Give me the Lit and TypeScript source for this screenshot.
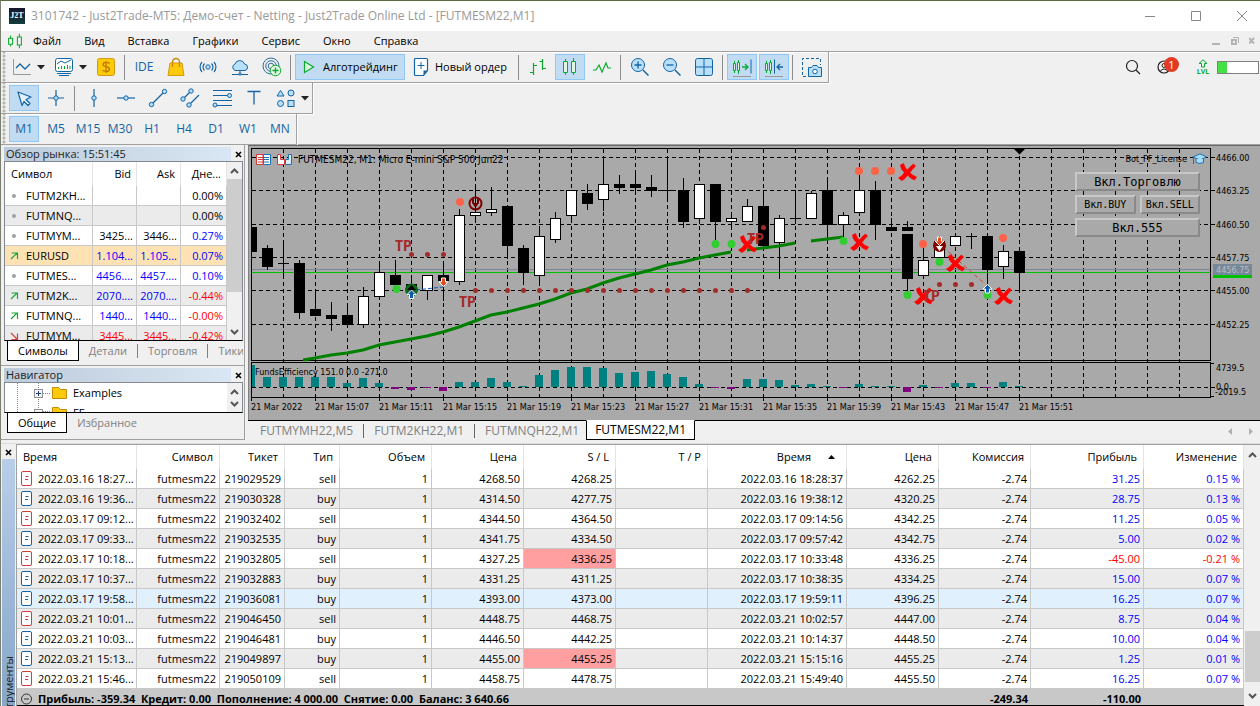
import { LitElement, html, svg, css } from "lit";
import { customElement } from "lit/decorators.js";
import { classMap } from "lit/directives/class-map.js";

const B = "#1464a5";
const L = "#b8e0fb";
const G = "#0aa82f";

const icons: Record<string, unknown> = {
  app: svg`<path d="M4.500 3v14M15.500 1v18" stroke="${G}" stroke-width="1.300"/><path d="M2 6.500h5v7.500H2zM13 5h5v10h-5z" fill="#f0f0f0" stroke="${G}" stroke-width="1.300"/>`,
  line: svg`<path d="M1.500 2v15.500H19" fill="none" stroke="#999"/><path d="M4 11l4-4 5 5 5-5" fill="none" stroke="${B}" stroke-width="1.300"/>`,
  monitor: svg`<rect x="1.500" y="1.500" width="17" height="13" rx="2" fill="#fff" stroke="${B}"/><path d="M3 7l4-3 4 2 6-3" fill="none" stroke="${B}"/><path d="M4.500 12v-2M7.500 12V9M10.500 12v-3M13.500 12V8M16 12V9" stroke="${G}"/><path d="M3 16.500h14M5 18.500h10" stroke="${B}"/>`,
  dollar: svg`<rect x="1.500" y="1.500" width="17" height="17" rx="2" fill="#fdca0a" stroke="#d39a10"/><path d="M13.500 6.500c-1-1.300-6.500-1.800-6.500 1 0 3 6.500 1.500 6.500 4.700 0 3-6 2.600-7 .8M10 4v12" fill="none" stroke="#c07c00" stroke-width="1.300"/>`,
  bag: svg`<path d="M4 6h12l2 12.500H2z" fill="#fdca0a" stroke="#d39a10"/><path d="M6.500 10V5a3.500 3.500 0 0 1 7 0v5" fill="none" stroke="#c58a08" stroke-width="1.300"/>`,
  signal: svg`<circle cx="10" cy="10" r="2.200" fill="${L}" stroke="${B}"/><path d="M6.500 6.500a5 5 0 0 0 0 7M13.500 6.500a5 5 0 0 1 0 7M4 5a7.500 7.500 0 0 0 0 10M16 5a7.500 7.500 0 0 1 0 10" fill="none" stroke="${B}" stroke-width="1.200"/>`,
  cloud: svg`<path d="M5 13.500a3.500 3.500 0 0 1 0-6.500 5 5 0 0 1 9.500 0 3.300 3.300 0 0 1 .5 6.500z" fill="${L}" stroke="${B}"/><path d="M10 14v3M2 17.500h16" stroke="${B}"/><circle cx="10" cy="17" r="1.200" fill="${L}" stroke="${B}"/>`,
  target: svg`<circle cx="9" cy="9" r="8" fill="none" stroke="#2f6f9f"/><circle cx="9" cy="9" r="5.300" fill="none" stroke="#2f6f9f"/><circle cx="9" cy="9" r="2.800" fill="none" stroke="#2f6f9f"/><circle cx="13.500" cy="13.500" r="5.300" fill="#e2f8e4" stroke="${G}"/><path d="M13.500 10.500v6M10.500 13.500h6" stroke="${G}" stroke-width="1.300"/>`,
  play: svg`<path d="M5.500 4.500v11l9-5.500z" fill="#dff5e0" stroke="${G}" stroke-width="1.200"/>`,
  order: svg`<path d="M4.500 1.500h11q1 0 1 1v11l-4 5h-8q-1 0-1-1v-15q0-1 1-1z" fill="#fff" stroke="${B}" stroke-width="1.200"/><path d="M16.500 13.500h-4v5z" fill="${B}"/><path d="M10 5v7M6.500 8.500h7" stroke="${B}"/>`,
  bars: svg`<path d="M5.500 6v12M2 15.500h3.500M5.500 8.500H9M14.500 2v11M11.500 4.500h3M14.500 11.500H18" fill="none" stroke="${G}" stroke-width="1.200"/>`,
  candles: svg`<path d="M5.500 2v16M13.500 1v17" stroke="${G}"/><path d="M3.500 4.500h4v11h-4zM11.500 4.500h4v11h-4z" fill="#dff5e0" stroke="${G}"/>`,
  zigzag: svg`<path d="M1 13h3l3-5 3 7 4-9 2 5h3" fill="none" stroke="${G}" stroke-width="1.200"/>`,
  zoomin: svg`<circle cx="8" cy="8" r="6.500" fill="${L}" stroke="${B}"/><path d="M13 13l5.500 5.500" stroke="${B}" stroke-width="1.500"/><path d="M8 4.500v7M4.500 8h7" stroke="${B}" stroke-width="1.300"/>`,
  zoomout: svg`<circle cx="8" cy="8" r="6.500" fill="${L}" stroke="${B}"/><path d="M13 13l5.500 5.500" stroke="${B}" stroke-width="1.500"/><path d="M4.500 8h7" stroke="${B}" stroke-width="1.300"/>`,
  grid: svg`<rect x="1.500" y="1.500" width="17" height="17" rx="2" fill="${L}" stroke="${B}"/><path d="M10 2v16M2 10h16" stroke="${B}"/>`,
  autoscroll: svg`<path d="M2.500 4v12M6.500 3v14" stroke="${G}"/><path d="M1.500 6.500h2v7h-2zM5.500 5.500h2v8h-2z" fill="#dff5e0" stroke="${G}"/><path d="M10 10h6M13 7l3 3-3 3" fill="none" stroke="${G}" stroke-width="1.300"/><path d="M19 2.500v14" stroke="${B}"/><path d="M1 19.500h18" stroke="#999"/>`,
  shift: svg`<path d="M2.500 4v12M6.500 3v14" stroke="${G}"/><path d="M1.500 6.500h2v7h-2zM5.500 5.500h2v8h-2z" fill="#dff5e0" stroke="${G}"/><path d="M10.500 2.500v14" stroke="${B}"/><path d="M19 10h-6M16 7l-3 3 3 3" fill="none" stroke="${B}" stroke-width="1.300"/><path d="M1 19.500h18" stroke="#999"/>`,
  camera: svg`<path d="M4 19.500H.5V1.500h18V8" fill="none" stroke="${B}" stroke-dasharray="3 2"/><path d="M6.500 10.500h3l1.500-2h4l1.500 2h3v9h-13z" fill="${L}" stroke="${B}"/><circle cx="13" cy="14.500" r="2.300" fill="#fff" stroke="${B}"/>`,
  cursor: svg`<path d="M4 4l13 5-5 2.500 4 4-2 2-4-4-2 4z" fill="#e4f3fd" stroke="${B}" stroke-width="1.200" stroke-linejoin="round"/>`,
  cross: svg`<path d="M10 2v16M2 10h16" stroke="${B}" stroke-width="1.200"/><circle cx="10" cy="10" r="2.200" fill="${L}" stroke="${B}"/>`,
  vline: svg`<path d="M10 1v18" stroke="${B}" stroke-width="1.200"/><circle cx="10" cy="10" r="2.200" fill="${L}" stroke="${B}"/>`,
  hline: svg`<path d="M1 10h18" stroke="${B}" stroke-width="1.200"/><circle cx="10" cy="10" r="2.200" fill="${L}" stroke="${B}"/>`,
  trend: svg`<path d="M3 17L17 3" stroke="${B}" stroke-width="1.200"/><circle cx="3.500" cy="16.500" r="2.200" fill="${L}" stroke="${B}"/><circle cx="16.500" cy="3.500" r="2.200" fill="${L}" stroke="${B}"/>`,
  channel: svg`<path d="M3 11L11 3M9 17L19 7" stroke="${B}" stroke-width="1.200"/><circle cx="3" cy="11" r="2.200" fill="${L}" stroke="${B}"/><circle cx="11" cy="3" r="2.200" fill="${L}" stroke="${B}"/><circle cx="9" cy="17" r="2.200" fill="${L}" stroke="${B}"/>`,
  fibo: svg`<path d="M1 2.500h19M1 7.500h15M1 12.500h19M4 17.500h16" stroke="${B}" stroke-width="1.200"/><circle cx="17.500" cy="7.500" r="2" fill="${L}" stroke="${B}"/><circle cx="3" cy="17" r="2" fill="${L}" stroke="${B}"/>`,
  text: svg`<path d="M3.500 3.500h13M10 3.500v13" stroke="${B}" stroke-width="1.300"/>`,
  shapes: svg`<path d="M4.500 2.500L8 8H1z" fill="${L}" stroke="${B}"/><circle cx="15" cy="5" r="3" fill="${L}" stroke="${B}"/><circle cx="4.500" cy="15.500" r="3" fill="${L}" stroke="${B}"/><rect x="12" y="12.500" width="6" height="6" fill="${L}" stroke="${B}"/>`,
  search: svg`<circle cx="9" cy="9" r="5.500" fill="none" stroke="#222" stroke-width="1.200"/><path d="M13 13l4 4" stroke="#222" stroke-width="1.300"/>`,
  user: svg`<circle cx="10" cy="10" r="6" fill="none" stroke="#222" stroke-width="1.200"/><circle cx="10" cy="8.500" r="2" fill="none" stroke="#222"/><path d="M6 14.500q4-5 8 0" fill="none" stroke="#222"/>`,
};

const icon = (name: string) => html`<svg class="ic" width="20" height="20" viewBox="0 0 20 20" aria-hidden="true">${icons[name]}</svg>`;
const caret = html`<svg class="caret" width="8" height="5" viewBox="0 0 8 5" aria-hidden="true"><path d="M0 0h8L4 4.500z" fill="#222"/></svg>`;
const chevron = (d: string) => html`<svg class="chev" width="9" height="6" viewBox="0 0 9 6" aria-hidden="true"><path d="${d}" fill="none" stroke="#555" stroke-width="2"/></svg>`;
const UP = "M1 5l3.500-3.500L8 5";
const DOWN = "M1 1l3.500 3.500L8 1";
const closeX = html`<svg width="7" height="7" viewBox="0 0 7 7" aria-hidden="true"><path d="M1 1l5 5M6 1L1 6" stroke="#000" stroke-width="1.600"/></svg>`;

// centre x, wick top, wick bottom, body top, body bottom, kind (b black, w white, d doji)
const candles: [number, number, number, number, number, string][] = [
  [251, 227, 252, 227, 252, "b"], [267, 245, 270, 248, 267, "b"], [283, 241, 278, 263, 263, "d"],
  [299, 260, 319, 263, 313, "b"], [315, 292, 316, 309, 316, "b"], [331, 302, 331, 315, 319, "b"],
  [347, 304, 328, 315, 325, "b"], [363, 287, 328, 296, 325, "w"], [379, 262, 297, 272, 297, "w"],
  [395, 260, 285, 275, 285, "b"], [411, 278, 295, 284, 293, "b"], [427, 275, 300, 275, 291, "w"],
  [443, 262, 301, 275, 281, "b"], [459, 209, 285, 215, 282, "w"], [475, 184, 222, 212, 216, "w"],
  [491, 187, 216, 209, 213, "w"], [507, 206, 259, 206, 246, "b"], [523, 245, 285, 248, 273, "b"],
  [539, 230, 285, 236, 276, "w"], [555, 212, 243, 218, 240, "w"], [571, 190, 222, 190, 216, "w"],
  [587, 184, 210, 193, 204, "b"], [603, 160, 211, 184, 200, "w"], [619, 175, 194, 184, 188, "b"],
  [635, 172, 193, 184, 188, "b"], [651, 175, 197, 187, 191, "b"], [667, 160, 200, 190, 190, "d"],
  [683, 178, 228, 190, 222, "b"], [699, 184, 224, 184, 219, "w"], [715, 184, 240, 184, 222, "b"],
  [731, 213, 228, 218, 222, "w"], [747, 199, 222, 206, 222, "w"], [763, 190, 248, 206, 246, "b"],
  [779, 215, 279, 218, 243, "w"], [795, 190, 224, 218, 218, "d"], [811, 191, 219, 193, 219, "w"],
  [827, 178, 240, 190, 225, "b"], [843, 212, 240, 215, 225, "w"], [859, 175, 213, 190, 213, "w"],
  [875, 181, 240, 190, 225, "b"], [891, 218, 231, 227, 231, "b"], [907, 221, 231, 227, 231, "b"],
  [907, 234, 295, 234, 279, "b"], [923, 250, 276, 260, 276, "w"], [939, 236, 258, 241, 258, "w"],
  [955, 234, 246, 236, 246, "w"], [971, 233, 249, 236, 236, "d"], [987, 234, 288, 236, 270, "b"],
  [1003, 245, 279, 251, 267, "w"], [1019, 251, 290, 251, 273, "b"],
];

// histogram heights from x = 267, step 16; negative values hang below zero
const histogram = [10, 10, 10, 10, 10, 4, 9, 4, -2, -3, -1, -4, 5, 5, 9, 5, 1, 12, 17, 20, 20, 19, 14, 15, 16, 13,
  10, 3, -1, -2, 8, 8, 7, 2, 3, 1, -1, 3, 1, 1, -5, 2, -1, 4, 4, -1, 5, 1];

const gridX = Array.from({ length: 29 }, (_, i) => 283 + i * 32);
const gridY: [number, string][] = [[157, "4466.00"], [190, "4463.25"], [224, "4460.50"], [257, "4457.75"], [290, "4455.00"], [324, "4452.25"]];
const times = ["21 Mar 2022", ...["07", "11", "15", "19", "23", "27", "31", "35", "39", "43", "47", "51"].map((m) => `21 Mar 15:${m}`)];
const profitDots: [number, number][] = [[411, 254], [427, 254], [443, 254], ...Array.from({ length: 18 }, (_, i): [number, number] => [475 + i * 16, 290]), [939, 284], [955, 284], [971, 284], [763, 227]];
const sellDots = [[460, 202], [859, 171], [875, 171], [891, 171], [923, 244], [1003, 238]];
const buyDots = [[396, 289], [715, 244], [731, 244], [843, 241], [939, 262], [907, 295], [987, 295]];
const crosses = [[907, 172], [747, 244], [859, 242], [955, 263], [923, 296], [1003, 296]];
const tps = [[395, 251], [459, 307], [747, 244], [923, 301]];

const watch = [
  ["dot", "FUTM2KH...", "", "", "0.00%", "k", "k"],
  ["dot", "FUTMNQ...", "", "", "0.00%", "k", "k"],
  ["dot", "FUTMYM...", "3425...", "3446...", "0.27%", "k", "b"],
  ["up", "EURUSD", "1.104...", "1.105...", "0.07%", "b", "b"],
  ["dot", "FUTMES...", "4456....", "4457....", "0.10%", "b", "b"],
  ["up", "FUTM2K...", "2070....", "2070....", "-0.44%", "b", "r"],
  ["up", "FUTMNQ...", "1440...", "1440...", "-0.00%", "b", "r"],
  ["down", "FUTMYM...", "3445...", "3445...", "-0.42%", "r", "r"],
];
const marks: Record<string, unknown> = {
  dot: svg`<circle cx="5" cy="5" r="2" fill="#a0a0a0"/>`,
  up: svg`<path d="M2 8l6-6M2.500 2h6v6" fill="none" stroke="#18a838" stroke-width="1.200"/>`,
  down: svg`<path d="M2 2l6 6M2.500 8.500h6v-6" fill="none" stroke="#d04040" stroke-width="1.200"/>`,
};

const deals = [
  ["2022.03.16 18:27...", "219029529", "sell", "4268.50", "4268.25", "2022.03.16 18:28:37", "4262.25", "31.25", "0.15 %"],
  ["2022.03.16 19:36...", "219030328", "buy", "4314.50", "4277.75", "2022.03.16 19:38:12", "4320.25", "28.75", "0.13 %"],
  ["2022.03.17 09:12...", "219032402", "sell", "4344.50", "4364.50", "2022.03.17 09:14:56", "4342.25", "11.25", "0.05 %"],
  ["2022.03.17 09:33...", "219032535", "buy", "4341.75", "4334.50", "2022.03.17 09:57:42", "4342.75", "5.00", "0.02 %"],
  ["2022.03.17 10:18...", "219032805", "sell", "4327.25", "4336.25", "2022.03.17 10:33:48", "4336.25", "-45.00", "-0.21 %"],
  ["2022.03.17 10:37...", "219032883", "buy", "4331.25", "4311.25", "2022.03.17 10:38:35", "4334.25", "15.00", "0.07 %"],
  ["2022.03.17 19:58...", "219036081", "buy", "4393.00", "4373.00", "2022.03.17 19:59:11", "4396.25", "16.25", "0.07 %"],
  ["2022.03.21 10:01...", "219046450", "sell", "4448.75", "4468.75", "2022.03.21 10:02:57", "4447.00", "8.75", "0.04 %"],
  ["2022.03.21 10:03...", "219046481", "buy", "4446.50", "4442.25", "2022.03.21 10:14:37", "4448.50", "10.00", "0.04 %"],
  ["2022.03.21 15:13...", "219049897", "buy", "4455.00", "4455.25", "2022.03.21 15:15:16", "4455.25", "1.25", "0.01 %"],
  ["2022.03.21 15:46...", "219050109", "sell", "4458.75", "4478.75", "2022.03.21 15:49:40", "4455.50", "16.25", "0.07 %"],
];
const dealCols = [120, 83, 65, 55, 92, 92, 92, 92, 139, 92, 92, 113, 100];
const dealHeads = ["Время", "Символ", "Тикет", "Тип", "Объем", "Цена", "S / L", "T / P", "Время", "Цена", "Комиссия", "Прибыль", "Изменение"];

@customElement("app-root")
export class AppRoot extends LitElement {
  static styles = css`
    :host { display: block; height: 100vh; overflow: hidden; background: #f0f0f0; color: #000; font: 11px/16px "Open Sans", "Noto Sans", sans-serif; }
    * { box-sizing: border-box; }
    button { font: inherit; color: inherit; background: none; border: 0; padding: 0; margin: 0; white-space: nowrap; }
    svg { display: block; flex: none; }
    .window { height: 100%; display: flex; flex-direction: column; border-top: 1px solid #5c6b3b; border-left: 1px solid #7c8070; }
    .title { flex: none; height: 30px; background: #fff; display: flex; align-items: center; padding-left: 8px; color: #999; font-size: 12px; white-space: nowrap; }
    .logo { flex: none; width: 16px; height: 16px; margin-right: 6px; background: linear-gradient(#15162c, #123c3c); color: #fff; font: bold 8px/16px "Liberation Serif", serif; text-align: center; }
    .grow { flex: 1; }
    .winbtns { display: flex; gap: 24px; padding-right: 7px; }
    .winbtns svg { margin: 2px; }
    .winbtns button { width: 22px; display: grid; place-items: center; }
    .menu { flex: none; height: 21px; display: flex; align-items: center; gap: 23px; padding: 0 5px 0 6px; border-bottom: 1px solid #a0a0a0; }
    .menu .ic { width: 16px; height: 16px; margin-right: -13px; }
    .mdi { display: flex; gap: 9px; align-items: center; }
    .bars { flex: none; display: flex; flex-direction: column; align-items: flex-start; box-shadow: inset 0 1px #fff, inset 0 -1px #a0a0a0; }
    .row { display: flex; width: 100%; }
    .bar { height: 31px; display: flex; align-items: center; gap: 2px; padding: 0 1px 0 8px; border-bottom: 1px solid #a0a0a0; border-right: 1px solid #a0a0a0; box-shadow: 1px 1px #fff; background: radial-gradient(circle at 2px 2px, #b4b4b4 1px, transparent 2px) 1px 2px / 4px 4px repeat-y; color: #1464a5; font-size: 12px; }
    .bar.first { padding-left: 6px; }
    .bar.last { box-shadow: 1px 0 #fff; }
    .tb { flex: none; width: 30px; height: 26px; display: grid; place-items: center; }
    .tb.on { background: #c1dcf2; box-shadow: inset 0 0 0 1px #90c8f6; }
    .wide { flex: none; width: 110px; height: 26px; display: flex; align-items: center; gap: 4px; padding-left: 4px; color: #000; font-size: 11px; }
    .wide.on { background: #c1dcf2; box-shadow: inset 0 0 0 1px #90c8f6; }
    .wide.order { width: 108px; }
    .sep { flex: none; width: 1px; height: 25px; margin: 0 2px 0 1px; background: #8c8c8c; }
    .caret { margin: 0 2px 0 -2px; }
    .status { display: flex; align-items: center; height: 30px; padding-right: 1px; }
    .status button { position: relative; width: 20px; height: 20px; }
    .search { margin-right: 11px; }
    .user { margin-right: 21px; }
    .badge { position: absolute; left: 10px; top: 0; width: 15px; height: 15px; border-radius: 50%; background: #e23b22; color: #fff; font: 11px/15px "Open Sans", sans-serif; text-align: center; }
    .lvl { display: flex; flex-direction: column; align-items: center; width: 16px; margin-right: 6px; color: #0aa82f; font: bold 7px/7px "Open Sans", sans-serif; }
    .meter { width: 42px; height: 13px; border: 1px solid #808080; background: linear-gradient(90deg, #45e045 9px, #fff 9px); }
    .main { flex: none; display: flex; }
    .left { flex: none; width: 244px; display: flex; flex-direction: column; border-right: 1px solid #a0a0a0; }
    .panel { padding: 2px 1px 0 3px; display: flex; flex-direction: column; border-bottom: 1px solid #a0a0a0; }
    .nav { flex: 1; }
    .cap { height: 14px; display: flex; align-items: center; justify-content: space-between; background: linear-gradient(90deg, #bccada, #d9e7f4) 0 0 / calc(100% - 12px) 100% no-repeat; padding: 0 1px 0 2px; color: #222; }
    .box { display: flex; border: 1px solid #828790; border-bottom: 1px solid #000; background: #fff; overflow: hidden; }
    .box.quotes { height: 180px; }
    .box.tree { height: 31px; }
    table { border-collapse: separate; border-spacing: 0; table-layout: fixed; }
    th { font-weight: normal; }
    th, td { white-space: nowrap; overflow: hidden; text-align: right; border-right: 1px solid #c8c8c8; }
    .q { flex: 1; min-width: 0; align-self: flex-start; }
    .q th { height: 24px; padding: 0 5px; border-color: #e4e4e4; }
    .q td { height: 20px; padding: 0 3px 0 0; border-bottom: 1px solid #c8c8c8; }
    .q th:first-child { text-align: left; padding-left: 6px; }
    .sym { display: flex; align-items: center; gap: 7px; padding-left: 4px; }
    .q tr:nth-child(even) td { background: #ebebeb; }
    .q tr.sel td { background: #ffe2b4; }
    .b { color: #00f; } .r { color: #f00; }
    .sb { flex: none; width: 15px; background: #f0f0f0; display: flex; flex-direction: column; justify-content: space-between; align-items: center; padding: 6px 0 5px; }
    .q-thumb { width: 15px; height: 113px; background: #cdcdcd; margin: 5px 0 auto; flex: none; }
    .tabs { height: 24px; display: flex; align-items: flex-start; overflow: hidden; color: #808080; padding-left: 3px; }
    .tabs button { flex: none; height: 14px; margin-top: 3px; padding: 0 10px; border-right: 1px solid #808080; display: flex; align-items: center; }
    .tabs button.on { color: #000; background: #fff; height: 21px; margin: -1px 0 0; border: 1px solid #000; border-top-color: #fff; }
    .tabs button:last-child { border-right: 0; }
    .treebody { flex: 1; min-width: 0; width: 0; }
    .chart { flex: 1; min-width: 0; margin-left: 3px; display: flex; flex-direction: column; }
    .canvas { position: relative; display: flex; height: 275px; background: #a9a9a9; border-top: 1px solid #696969; border-left: 1px solid #808080; font: 9px "DejaVu Sans Condensed", "DejaVu Sans", sans-serif; }
    .plot { flex: 1; min-width: 0; height: 274px; overflow: hidden; }
    .name { font-size: 10px; }
    .tp { font: bold 15px "Roboto Condensed", Roboto, sans-serif; }
    .ea { position: absolute; right: 60px; top: 26px; width: 125px; display: grid; grid-template-columns: 1fr 1fr; gap: 4px 4px; font: 10px/16px "DejaVu Sans Mono", monospace; }
    .ea button { height: 19px; background: #a9a9a9; border: 2px solid; border-color: #c8c8c8 #898989 #898989 #c8c8c8; display: flex; align-items: center; justify-content: center; }
    .ea .full { grid-column: 1 / 3; font-size: 12px; }
    .lic { position: absolute; right: 53px; top: 7px; display: flex; gap: 5px; align-items: center; }
    .ctabs { height: 20px; display: flex; align-items: flex-start; border-top: 1px solid #000; color: #808080; font-size: 12px; padding-left: 2px; }
    .ctabs button { flex: none; height: 14px; margin-top: 3px; padding: 0 10px; border-right: 1px solid #666; display: flex; align-items: center; }
    .ctabs button.before { border: 0; padding-right: 7px; }
    .ctabs button.on { height: 20px; margin-top: -1px; padding: 0 8px; background: #fff; color: #000; border: 1px solid #000; border-top-color: #fff; }
    .arrows { display: flex; gap: 17px; padding: 7px 7px 0 0; }
    .toolbox { flex: 1; min-height: 0; margin-top: 3px; border-top: 1px solid #dcdcdc; display: flex; overflow: hidden; }
    .side { flex: none; width: 15px; display: flex; flex-direction: column; padding: 2px 1px 0; }
    .x { height: 13px; display: grid; place-items: center; }
    .vert { flex: 1; overflow: hidden; background: linear-gradient(#b9cee8, #86a6c8); padding-top: 197px; line-height: 13px; color: #222; }
    .vert span { display: block; writing-mode: vertical-rl; transform: rotate(180deg); white-space: nowrap; width: 13px; }
    .list { flex: 1; min-width: 0; border-left: 1px solid #a0a0a0; border-top: 1px solid #a0a0a0; background: #f0f0f0; }
    .d { width: 100%; background: #fff; }
    .d th { height: 24px; padding: 0 6px 0 0; border-color: #e4e4e4; }
    .d th:first-child { text-align: left; padding-left: 6px; }
    .d td { height: 20px; padding: 0 3px 0 0; border-bottom: 1px solid #c8c8c8; }
    .d tr:nth-child(even) td { background: #ebebeb; }
    .d tr.hot td { background: #e1f0fd; }
    .d tr td.stop { background: #ff9f9f; }
    .when { display: flex; gap: 5px; align-items: center; padding-left: 4px; }
    .sort { display: inline-block; vertical-align: middle; margin: 0 5px 2px 17px; }
    .d tfoot td { height: 17px; line-height: 13px; padding-top: 3px; background: #c8c8c8; border: 0; border-bottom: 1px solid #000; font-weight: bold; }
    .sum { display: flex; gap: 5px; align-items: center; padding-left: 4px; white-space: pre; }
    .vs { flex: none; width: 16px; background: #f0f0f0; border-top: 1px solid #a0a0a0; display: flex; flex-direction: column; align-items: center; padding: 7px 0 7px; }
    .vs .thumb { width: 15px; height: 51px; background: #cdcdcd; margin: auto 0 11px 1px; }
  `;

  private tool(name: string, label: string, on = false) {
    return html`<button class=${classMap({ tb: true, on })} aria-label=${label}>${icon(name)}</button>`;
  }

  private arrow(x: number, y: number, up: boolean, fill: string) {
    const s = up ? 1 : -1;
    return svg`<path transform="translate(${x} ${y}) scale(1 ${s})" d="M0-4.500L4.500 0H2V4H-2V0H-4.500z" fill="${fill}" stroke="#fff"/>`;
  }

  private renderPlot() {
    return html`<svg class="plot" role="img" aria-label="FUTMESM22 M1">
      <g transform="translate(-249 -146)">
        <g stroke="#000" stroke-dasharray="4 3" shape-rendering="crispEdges">
          ${gridX.map((x) => svg`<line x1="${x + 0.5}" x2="${x + 0.5}" y1="149" y2="397"/>`)}
          ${gridY.map(([y]) => svg`<line x1="252" x2="3000" y1="${y + 0.5}" y2="${y + 0.5}"/>`)}
          <line x1="252" x2="3000" y1="387.500" y2="387.500"/>
        </g>
        <g shape-rendering="crispEdges">
          <rect x="252" y="269" width="3000" height="1" fill="#778899"/>
          <rect x="252" y="272" width="3000" height="1" fill="#00c000"/>
          <path d="M3000 148.500H251.500V360.500H3000M3000 362.500H251.500V397.500H3000" fill="none" stroke="#000"/>
          ${times.map((_, i) => svg`<rect x="${251 + i * 64}" y="397" width="1" height="4"/>`)}
          ${candles.map(([x, t, b, o, c, k]) => svg`<rect x="${x}" y="${t}" width="1" height="${b - t}"/>
            ${k === "d" ? svg`<rect x="${x - 5}" y="${o}" width="11" height="1"/>`
              : k === "b" ? svg`<rect x="${x - 5}" y="${o}" width="11" height="${c - o}"/>`
              : svg`<rect x="${x - 4.5}" y="${o + 0.5}" width="10" height="${c - o - 1}" fill="#fff" stroke="#000"/>`}`)}
          <rect x="252" y="365" width="3" height="22" fill="#008080"/>
          ${histogram.map((h, i) => svg`<rect x="${263 + i * 16}" y="${h > 0 ? 387 - h : 387}" width="8" height="${Math.abs(h)}" fill="${h > 0 ? "#008080" : "#800080"}"/>`)}
          <rect x="240" y="146" width="11" height="220" fill="#a9a9a9"/>
          <rect x="251" y="148" width="1" height="213"/>
        </g>
        <path d="M1014 149h11l-5.500 5.500z"/>
        <g fill="none" stroke="#008000" stroke-width="3">
          <path d="M303 360L315 358 331 355 347 353 363 350 379 345 395 342 411 339 427 336 443 332 459 327 475 321 491 315 507 312 523 308 539 304 555 299 571 293 587 289 603 283 619 278 635 274 651 270 667 265 683 262 699 258 715 255 731 252"/>
          <path d="M747 250L763 248 779 246 795 243M811 241L827 239 843 237"/>
        </g>
        <path d="M416 290L443 287" stroke="#0a5cb0" stroke-dasharray="4 2"/>
        <path d="M943 247L985 284" stroke="#d04a20" stroke-dasharray="4 3"/>
        ${profitDots.map(([x, y]) => svg`<circle cx="${x + 0.5}" cy="${y + 0.5}" r="2.500" fill="#a52a2a"/>`)}
        <circle cx="475.500" cy="203.500" r="6" fill="#a9a9a9" stroke="#800000" stroke-width="2"/>
        <path d="M472 199h2v4h3v-4h2v4l-3.500 5-3.500-5z" fill="#700000"/><rect x="475" y="196" width="1" height="14"/>
        <circle cx="411.500" cy="290" r="6.500" fill="#0a6a1a"/><path d="M411.500 285l4.500 5h-3v3h-3v-3h-3z"/>
        <circle cx="939.500" cy="245.500" r="6.500" fill="#800000"/><path d="M936 246h7l-3.500 5z" fill="#fff"/>
        ${sellDots.map(([x, y]) => svg`<circle cx="${x}" cy="${y}" r="4" fill="#ff6347"/>`)}
        ${buyDots.map(([x, y]) => svg`<circle cx="${x + 0.5}" cy="${y}" r="4" fill="#32cd32"/>`)}
        ${crosses.map(([x, y]) => svg`<path transform="translate(${x + 0.5} ${y})" d="M-7-7l3-1.500Q-2-3 0-2 3-6 6-8l2 2Q4-2 2.500.500 5 4 9 5L7 8Q2 6 0 3-3 8-6 8.500L-9 6Q-5 4-3 .500-7-3-7-7z" fill="#f00" stroke="#f00" stroke-width=".7"/>`)}
        ${tps.map(([x, y]) => svg`<text class="tp" x="${x}" y="${y}" fill="#a52a2a">TP</text>`)}
        ${this.arrow(411.5, 294.5, true, "#0a5cb0")}
        ${this.arrow(987.5, 289, true, "#0a5cb0")}
        ${this.arrow(443.5, 282, false, "#e04a1c")}
        ${this.arrow(939.5, 241, false, "#e04a1c")}
        <path d="M256.500 154.500h6.500v10h-6.500zM258 157.500h5M258 159.500h5M258 162h5" fill="#fff" stroke="#d83a3a"/>
        <path d="M263.500 154.500h7v10h-7zM264 157.500h5M264 159.500h5M264 162h5" fill="#fff" stroke="#1a72b8"/>
        <path d="M277.500 154.500h3v5h4v5h-7z" fill="#fff" stroke="#d83a3a"/>
        <path d="M291.500 154.500h-3v5h-3v5h6z" fill="#d8ecfa" stroke="#1a72b8"/>
        <text class="name" x="298" y="163">FUTMESM22, M1: Micro E-mini S&amp;P 500 Jun22</text>
        <text x="255" y="375">FundsEfficiency 151.0 0.0 -271.0</text>
        ${times.map((t, i) => svg`<text x="${251 + i * 64}" y="410">${t}</text>`)}
      </g>
    </svg>`;
  }

  private renderAxis() {
    return html`<svg width="50" height="274" aria-hidden="true">
      <g transform="translate(-1210 -146)">
        <path d="M1210.500 148V361M1210.500 362V398" stroke="#000"/>
        ${gridY.map(([y, t]) => svg`<rect x="1211" y="${y}" width="4" height="1"/><text x="1216" y="${y + 4}">${t}</text>`)}
        <rect x="1211" y="363" width="3" height="1"/><rect x="1211" y="387" width="4" height="1"/><rect x="1211" y="396" width="3" height="1"/>
        <text x="1216" y="371">4739.5</text><text x="1216" y="390">0.0</text><text x="1215" y="395">-2019.5</text>
        <rect x="1213" y="266" width="39" height="12" fill="#00c000"/><rect x="1213" y="264" width="39" height="11" fill="#778899"/>
        <text x="1216" y="273" fill="#b8bfc6">4456.75</text>
      </g>
    </svg>`;
  }

  render() {
    return html`<div class="window">
      <header class="title">
        <div class="logo">J2T</div>
        <span>3101742 - Just2Trade-MT5: Демо-счет - Netting - Just2Trade Online Ltd - [FUTMESM22,M1]</span>
        <div class="grow"></div>
        <div class="winbtns">
          <button aria-label="Свернуть"><svg width="10" height="10"><path d="M0 5.500h10" stroke="#888"/></svg></button>
          <button aria-label="Развернуть"><svg width="10" height="10"><path d="M.5.500h9v9h-9z" fill="none" stroke="#888"/></svg></button>
          <button aria-label="Закрыть"><svg width="10" height="10"><path d="M0 0l10 10M10 0L0 10" stroke="#888"/></svg></button>
        </div>
      </header>
      <nav class="menu">
        ${icon("app")}
        ${["Файл", "Вид", "Вставка", "Графики", "Сервис", "Окно", "Справка"].map((m) => html`<button>${m}</button>`)}
        <div class="grow"></div>
        <div class="mdi">
          <button aria-label="Свернуть окно"><svg width="10" height="9"><path d="M1 7h8" stroke="#b4b4b4" stroke-width="2"/></svg></button>
          <button aria-label="Восстановить окно"><svg width="10" height="9"><path d="M2 3h4v4H2z" fill="none" stroke="#b4b4b4" stroke-width="2"/><path d="M3 .5h5.500V6" fill="none" stroke="#b4b4b4"/></svg></button>
          <button aria-label="Закрыть окно"><svg width="6" height="8"><path d="M0 1l5 5.500M5 1L0 6.500" stroke="#b4b4b4" stroke-width="2"/></svg></button>
        </div>
      </nav>
      <div class="bars">
        <div class="row">
          <div class="bar first">
            ${this.tool("line", "Графики")}${caret}${this.tool("monitor", "Профили")}${caret}${this.tool("dollar", "Обзор рынка")}
            <i class="sep"></i>
            <button class="tb">IDE</button>${this.tool("bag", "Маркет")}${this.tool("signal", "Сигналы")}${this.tool("cloud", "VPS")}${this.tool("target", "Тестер")}
            <i class="sep"></i>
            <button class="wide on">${icon("play")}Алготрейдинг</button>
            <button class="wide order">${icon("order")}Новый ордер</button>
            <i class="sep"></i>
            ${this.tool("bars", "Бары")}${this.tool("candles", "Свечи", true)}${this.tool("zigzag", "Линия")}
            <i class="sep"></i>
            ${this.tool("zoomin", "Увеличить")}${this.tool("zoomout", "Уменьшить")}${this.tool("grid", "Окна")}
            <i class="sep"></i>
            ${this.tool("autoscroll", "Автопрокрутка", true)}${this.tool("shift", "Сдвиг", true)}
            <i class="sep"></i>
            ${this.tool("camera", "Снимок")}
          </div>
          <div class="grow"></div>
          <div class="status">
            <button class="search" aria-label="Поиск">${icon("search")}</button>
            <button class="user" aria-label="Сообщения">${icon("user")}<span class="badge">1</span></button>
            <div class="lvl"><svg width="10" height="9"><path d="M3.500 8V4.500H1L5 .8l4 3.700H6.500V8z" fill="none" stroke="#0aa82f"/></svg>LVL</div>
            <div class="meter"></div>
          </div>
        </div>
        <div class="bar">
          ${this.tool("cursor", "Курсор", true)}${this.tool("cross", "Перекрестие")}
          <i class="sep"></i>
          ${this.tool("vline", "Вертикальная линия")}${this.tool("hline", "Горизонтальная линия")}${this.tool("trend", "Трендовая линия")}${this.tool("channel", "Канал")}${this.tool("fibo", "Фибоначчи")}${this.tool("text", "Текст")}${this.tool("shapes", "Фигуры")}${caret}
        </div>
        <div class="bar last">
          ${["M1", "M5", "M15", "M30", "H1", "H4", "D1", "W1", "MN"].map((t, i) => html`<button class=${classMap({ tb: true, on: i === 0 })}>${t}</button>`)}
        </div>
      </div>
      <div class="main">
        <aside class="left">
          <section class="panel">
            <div class="cap"><span>Обзор рынка: 15:51:45</span><button aria-label="Закрыть обзор рынка">${closeX}</button></div>
            <div class="box quotes">
              <table class="q">
                <colgroup><col style="width:88px"><col style="width:44px"><col style="width:44px"><col style="width:46px"></colgroup>
                <thead><tr><th>Символ</th><th>Bid</th><th>Ask</th><th>Дне...</th></tr></thead>
                <tbody>${watch.map(([m, s, bid, ask, ch, c1, c2]) => html`<tr class=${s === "EURUSD" ? "sel" : ""}>
                  <td><div class="sym"><svg width="10" height="10">${marks[m]}</svg>${s}</div></td>
                  <td class=${c1}>${bid}</td><td class=${c1}>${ask}</td><td class=${c2}>${ch}</td></tr>`)}</tbody>
              </table>
              <div class="sb">${chevron(UP)}<div class="q-thumb"></div>${chevron(DOWN)}</div>
            </div>
            <div class="tabs"><button class="on">Символы</button><button>Детали</button><button>Торговля</button><button>Тики</button></div>
          </section>
          <section class="panel nav">
            <div class="cap"><span>Навигатор</span><button aria-label="Закрыть навигатор">${closeX}</button></div>
            <div class="box tree">
              <svg class="treebody" height="30" font-family="Open Sans, sans-serif" font-size="11">
                <path d="M12.500 0v30M33.500 0v30M38 10.500h8M38 28.500h8" stroke="#888" stroke-dasharray="1 1"/>
                <rect x="29.500" y="6.500" width="8" height="8" fill="#f4f4f4" stroke="#909090"/><path d="M31 10.500h5M33.500 8v5" stroke="#1c3c90"/>
                <rect x="29.500" y="26.500" width="8" height="8" fill="#f4f4f4" stroke="#909090"/>
                <path d="M47.500 4.500h6l2 2h6v9h-14z" fill="#fdca0a" stroke="#c58a08"/><path d="M47.500 24.500h6l2 2h6v9h-14z" fill="#fdca0a" stroke="#c58a08"/>
                <text x="68" y="14">Examples</text><text x="68" y="34">FF</text>
              </svg>
              <div class="sb">${chevron(UP)}${chevron(DOWN)}</div>
            </div>
            <div class="tabs"><button class="on">Общие</button><button>Избранное</button></div>
          </section>
        </aside>
        <section class="chart">
          <div class="canvas">
            ${this.renderPlot()}${this.renderAxis()}
            <div class="lic">Bot_FF_License<svg width="15" height="12" viewBox="0 0 15 12"><path d="M.8 4L8 .8 14.500 4 8 7z" fill="#a8dcf8" stroke="#1a72b8"/><path d="M4 6v3.500q4 2 7.500 0V6M1.500 4.500V11" fill="#a8dcf8" stroke="#1a72b8"/></svg></div>
            <div class="ea"><button class="full">Вкл.Торговлю</button><button>Вкл.BUY</button><button>Вкл.SELL</button><button class="full">Вкл.555</button></div>
          </div>
          <div class="ctabs">
            <button>FUTMYMH22,M5</button><button>FUTM2KH22,M1</button><button class="before">FUTMNQH22,M1</button><button class="on">FUTMESM22,M1</button>
            <div class="grow"></div>
            <div class="arrows"><svg width="4" height="7"><path d="M4 0v7L0 3.500z" fill="#b0b0b0"/></svg><svg width="4" height="7"><path d="M0 0v7l4-3.500z" fill="#b0b0b0"/></svg></div>
          </div>
        </section>
      </div>
      <section class="toolbox">
        <div class="side"><button class="x" aria-label="Закрыть инструменты">${closeX}</button><div class="vert"><span>Инструменты</span></div></div>
        <div class="list">
          <table class="d">
            <colgroup>${dealCols.map((w) => html`<col style="width:${w}px">`)}</colgroup>
            <thead><tr>${dealHeads.map((h, i) => html`<th>${h}${i === 8 ? html`<svg class="sort" width="7" height="4"><path d="M0 4h7L3.500 0z"/></svg>` : ""}</th>`)}</tr></thead>
            <tbody>${deals.map(([open, ticket, type, price, sl, close, out, profit, change], i) => {
              const c = profit[0] === "-" ? "r" : "b";
              const ink = type === "sell" ? "#d83a3a" : "#1464a5";
              return html`<tr class=${i === 6 ? "hot" : ""}>
                <td><div class="when"><svg width="12" height="16"><rect x=".5" y=".5" width="10" height="14" rx="1.500" fill="#fff" stroke=${ink}/><path d="M4.500 5.500h3M4 8.500h3" stroke=${ink}/></svg>${open}</div></td>
                <td>futmesm22</td><td>${ticket}</td><td>${type}</td><td>1</td><td>${price}</td>
                <td class=${i === 4 || i === 9 ? "stop" : ""}>${sl}</td><td></td><td>${close}</td><td>${out}</td><td>-2.74</td>
                <td class=${c}>${profit}</td><td class=${c}>${change}</td></tr>`;
            })}</tbody>
            <tfoot><tr><td colspan="10"><div class="sum"><svg width="12" height="12"><circle cx="5.500" cy="6" r="5" fill="none" stroke="#333"/><path d="M3 6h5" stroke="#333"/></svg>Прибыль: -359.34  Кредит: 0.00  Пополнение: 4 000.00  Снятие: 0.00  Баланс: 3 640.66</div></td><td>-249.34</td><td>-110.00</td><td></td></tr></tfoot>
          </table>
        </div>
        <div class="vs">${chevron(UP)}<div class="thumb"></div>${chevron(DOWN)}</div>
      </section>
    </div>`;
  }
}
